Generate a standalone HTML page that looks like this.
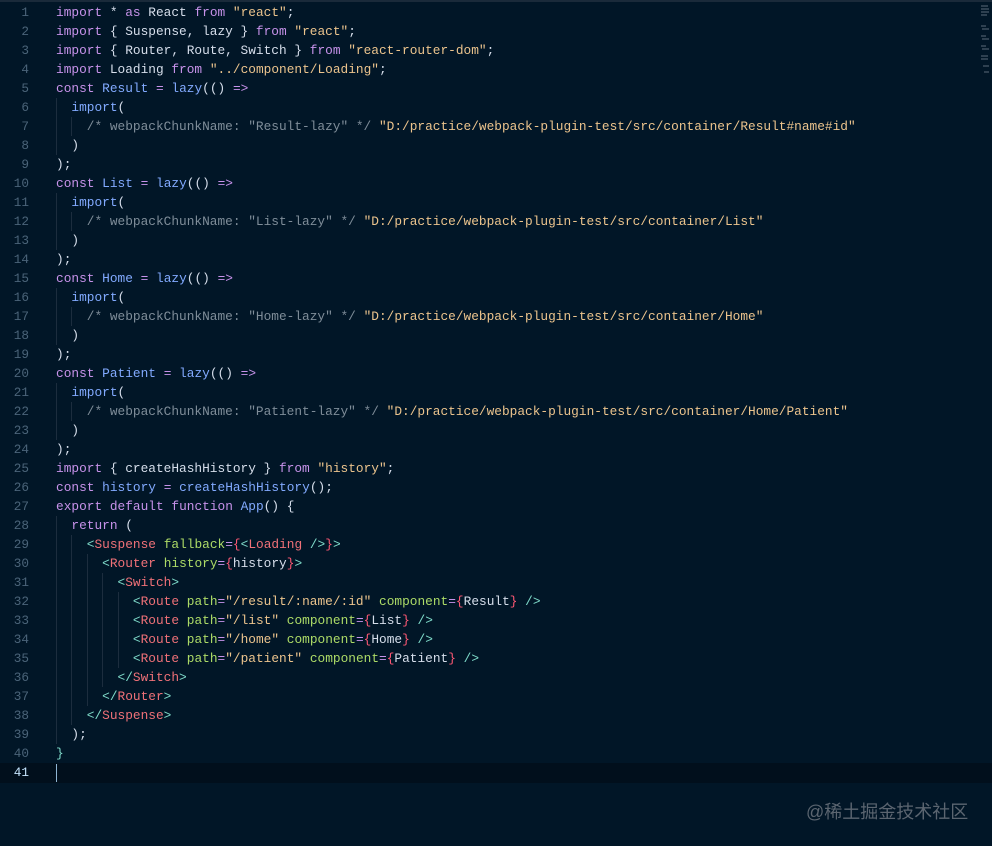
<!DOCTYPE html>
<html><head><meta charset="utf-8"><style>
html,body{margin:0;padding:0;background:#011627;width:992px;height:846px;overflow:hidden}
.top{position:absolute;left:0;top:0;width:992px;height:2px;background:#1a2a3a}
.cur{position:absolute;left:0;top:763px;width:992px;height:20px;background:#010f1c}
.ln{position:absolute;left:0;top:3px;width:29px;text-align:right;font:12.7px/19px "Liberation Mono",monospace;color:#4b6479;white-space:pre}
.code{position:absolute;left:56px;top:3px;font:12.82px/19px "Liberation Mono",monospace;color:#d6deeb;white-space:pre}
.g{position:absolute;width:1px;background:#1c2d3e}
.k{color:#c792ea}.v{color:#82aaff}.s{color:#ecc48d}.c{color:#7f8d99}.t{color:#f07178}.b{color:#7fdbca}.a{color:#addb67}.r{color:#ff5874}
.wm{position:absolute;left:806px;top:798px;font:18px "Liberation Sans","Noto Sans CJK SC",sans-serif;color:#5b6570}
.caret{position:absolute;left:56px;top:764px;width:1px;height:18px;background:#8fb5d3}
.mm{position:absolute;left:980px;top:4px;width:10px;height:80px}
</style></head><body>
<div class="top"></div>
<div class="cur"></div>
<div class="g" style="left:56px;top:98px;height:57px"></div>
<div class="g" style="left:56px;top:193px;height:57px"></div>
<div class="g" style="left:56px;top:288px;height:57px"></div>
<div class="g" style="left:56px;top:383px;height:57px"></div>
<div class="g" style="left:56px;top:516px;height:228px"></div>
<div class="g" style="left:71px;top:117px;height:19px"></div>
<div class="g" style="left:71px;top:212px;height:19px"></div>
<div class="g" style="left:71px;top:307px;height:19px"></div>
<div class="g" style="left:71px;top:402px;height:19px"></div>
<div class="g" style="left:71px;top:535px;height:190px"></div>
<div class="g" style="left:87px;top:554px;height:152px"></div>
<div class="g" style="left:102px;top:573px;height:114px"></div>
<div class="g" style="left:118px;top:592px;height:76px"></div>
<div class="caret"></div>
<div class="ln">1
2
3
4
5
6
7
8
9
10
11
12
13
14
15
16
17
18
19
20
21
22
23
24
25
26
27
28
29
30
31
32
33
34
35
36
37
38
39
40
<span style="color:#c5e4fd">41</span></div>
<div class="code"><span class="k">import</span> * <span class="k">as</span> React <span class="k">from</span> <span class="s">"react"</span>;
<span class="k">import</span> { Suspense, lazy } <span class="k">from</span> <span class="s">"react"</span>;
<span class="k">import</span> { Router, Route, Switch } <span class="k">from</span> <span class="s">"react-router-dom"</span>;
<span class="k">import</span> Loading <span class="k">from</span> <span class="s">"../component/Loading"</span>;
<span class="k">const</span> <span class="v">Result</span> <span class="k">=</span> <span class="v">lazy</span>(() <span class="k">=&gt;</span>
  <span class="v">import</span>(
    <span class="c">/* webpackChunkName: "Result-lazy" */</span> <span class="s">"D:/practice/webpack-plugin-test/src/container/Result#name#id"</span>
  )
);
<span class="k">const</span> <span class="v">List</span> <span class="k">=</span> <span class="v">lazy</span>(() <span class="k">=&gt;</span>
  <span class="v">import</span>(
    <span class="c">/* webpackChunkName: "List-lazy" */</span> <span class="s">"D:/practice/webpack-plugin-test/src/container/List"</span>
  )
);
<span class="k">const</span> <span class="v">Home</span> <span class="k">=</span> <span class="v">lazy</span>(() <span class="k">=&gt;</span>
  <span class="v">import</span>(
    <span class="c">/* webpackChunkName: "Home-lazy" */</span> <span class="s">"D:/practice/webpack-plugin-test/src/container/Home"</span>
  )
);
<span class="k">const</span> <span class="v">Patient</span> <span class="k">=</span> <span class="v">lazy</span>(() <span class="k">=&gt;</span>
  <span class="v">import</span>(
    <span class="c">/* webpackChunkName: "Patient-lazy" */</span> <span class="s">"D:/practice/webpack-plugin-test/src/container/Home/Patient"</span>
  )
);
<span class="k">import</span> { createHashHistory } <span class="k">from</span> <span class="s">"history"</span>;
<span class="k">const</span> <span class="v">history</span> <span class="k">=</span> <span class="v">createHashHistory</span>();
<span class="k">export</span> <span class="k">default</span> <span class="k">function</span> <span class="v">App</span>() {
  <span class="k">return</span> (
    <span class="b">&lt;</span><span class="t">Suspense</span> <span class="a">fallback</span><span class="k">=</span><span class="r">{</span><span class="b">&lt;</span><span class="t">Loading</span> <span class="b">/&gt;</span><span class="r">}</span><span class="b">&gt;</span>
      <span class="b">&lt;</span><span class="t">Router</span> <span class="a">history</span><span class="k">=</span><span class="r">{</span>history<span class="r">}</span><span class="b">&gt;</span>
        <span class="b">&lt;</span><span class="t">Switch</span><span class="b">&gt;</span>
          <span class="b">&lt;</span><span class="t">Route</span> <span class="a">path</span><span class="k">=</span><span class="s">"/result/:name/:id"</span> <span class="a">component</span><span class="k">=</span><span class="r">{</span>Result<span class="r">}</span> <span class="b">/&gt;</span>
          <span class="b">&lt;</span><span class="t">Route</span> <span class="a">path</span><span class="k">=</span><span class="s">"/list"</span> <span class="a">component</span><span class="k">=</span><span class="r">{</span>List<span class="r">}</span> <span class="b">/&gt;</span>
          <span class="b">&lt;</span><span class="t">Route</span> <span class="a">path</span><span class="k">=</span><span class="s">"/home"</span> <span class="a">component</span><span class="k">=</span><span class="r">{</span>Home<span class="r">}</span> <span class="b">/&gt;</span>
          <span class="b">&lt;</span><span class="t">Route</span> <span class="a">path</span><span class="k">=</span><span class="s">"/patient"</span> <span class="a">component</span><span class="k">=</span><span class="r">{</span>Patient<span class="r">}</span> <span class="b">/&gt;</span>
        <span class="b">&lt;/</span><span class="t">Switch</span><span class="b">&gt;</span>
      <span class="b">&lt;/</span><span class="t">Router</span><span class="b">&gt;</span>
    <span class="b">&lt;/</span><span class="t">Suspense</span><span class="b">&gt;</span>
  );
<span class="b">}</span>
</div>
<svg class="mm" viewBox="0 0 10 80"><g stroke="#5a6a7a" stroke-width="1"><line x1="1" y1="2" x2="8" y2="2"/><line x1="1" y1="5" x2="9" y2="5"/><line x1="1" y1="8" x2="9" y2="8"/><line x1="1" y1="11" x2="7" y2="11"/><line x1="1" y1="22" x2="6" y2="22"/><line x1="2" y1="25" x2="9" y2="25"/><line x1="1" y1="32" x2="6" y2="32"/><line x1="2" y1="35" x2="9" y2="35"/><line x1="1" y1="42" x2="6" y2="42"/><line x1="2" y1="45" x2="9" y2="45"/><line x1="1" y1="52" x2="8" y2="52"/><line x1="1" y1="55" x2="8" y2="55"/><line x1="3" y1="62" x2="9" y2="62"/><line x1="4" y1="68" x2="9" y2="68"/></g></svg>
<div class="wm">@稀土掘金技术社区</div>
</body></html>
